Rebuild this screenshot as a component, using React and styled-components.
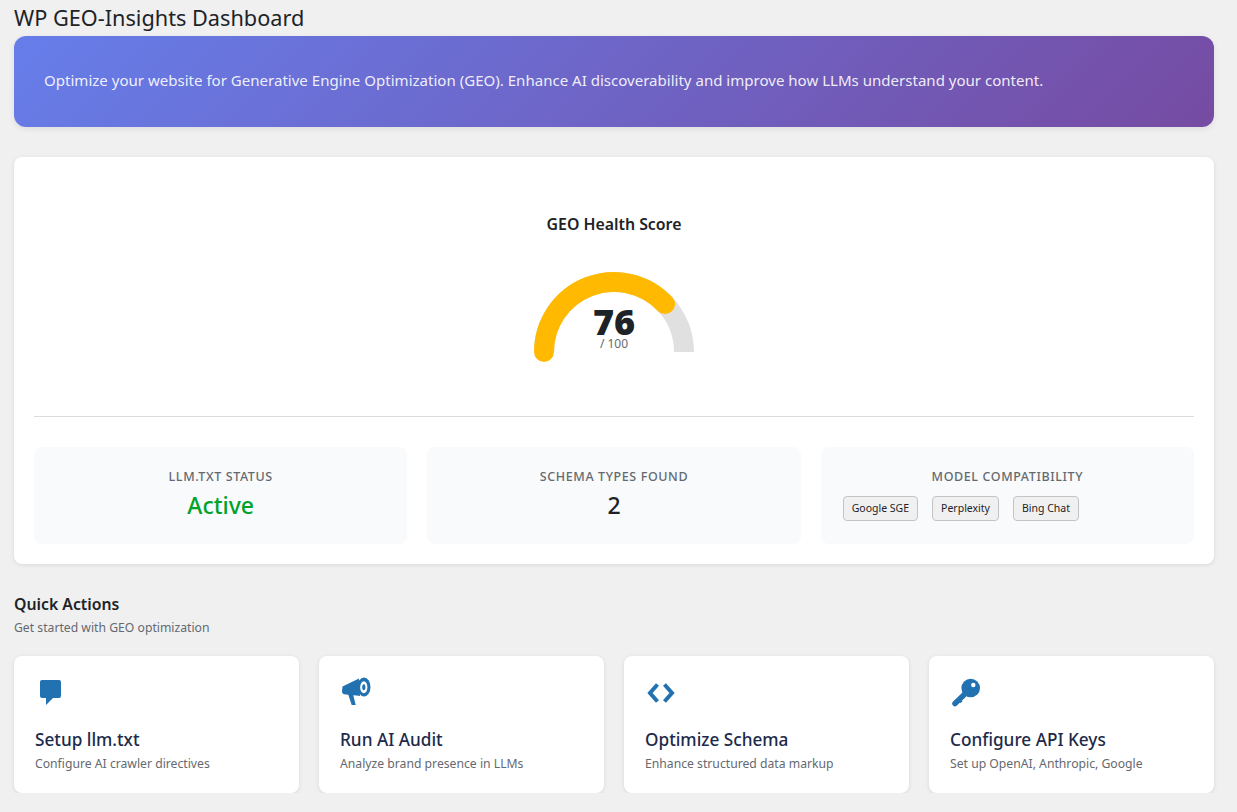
import React from 'react';
import styled, {createGlobalStyle} from 'styled-components';

const Global = createGlobalStyle`
  html, body { margin: 0; padding: 0; background: #f0f0f1; }
  body { font-family: "Noto Sans", "Open Sans", "Liberation Sans", sans-serif; color: #1d2327; }
  * { box-sizing: border-box; }
`;

const Page = styled.div`
  width: 1200px;
  margin-left: 14px;
`;

const Title = styled.h1`
  margin: 0;
  padding-top: 3px;
  height: 36px;
  font-size: 21.7px;
  line-height: 29px;
  font-weight: 400;
  color: #1d2327;
`;

const Hero = styled.div`
  height: 91px;
  padding: 0 30px 3px;
  display: flex;
  align-items: center;
  border-radius: 12px;
  background: linear-gradient(135deg, #667eea 0%, #764ba2 100%);
  color: rgba(255,255,255,0.9);
  font-size: 15.05px;
  box-shadow: 0 2px 6px rgba(0,0,0,0.08);
`;

const ScoreCard = styled.section`
  margin-top: 30px;
  height: 407px;
  padding: 0 20px;
  background: #fff;
  border-radius: 8px;
  box-shadow: 0 1px 4px rgba(0,0,0,0.1);
`;

const GaugeArea = styled.div`
  height: 260px;
  display: flex;
  flex-direction: column;
  align-items: center;
  border-bottom: 1px solid #dcdcde;
`;

const GaugeTitle = styled.h2`
  margin: 56px 0 0;
  font-size: 15.85px;
  line-height: 22px;
  font-weight: 600;
  color: #1d2327;
`;

const GaugeBox = styled.div`
  position: relative;
  margin-top: 37px;
  width: 160px;
  height: 80px;
`;

const GaugeSvg = styled.svg`
  display: block;
  overflow: visible;
`;

const GaugeValue = styled.div`
  position: absolute;
  left: 0;
  right: 0;
  top: 35px;
  text-align: center;
  font-size: 36px;
  line-height: 30px;
  font-weight: 900;
  color: #1d2327;
`;

const GaugeMax = styled.div`
  position: absolute;
  left: 0;
  right: 0;
  top: 65px;
  text-align: center;
  font-size: 12px;
  line-height: 13px;
  color: #646970;
`;

const Stats = styled.div`
  margin-top: 30px;
  display: grid;
  grid-template-columns: repeat(3, 1fr);
  gap: 20px;
`;

const Stat = styled.div`
  height: 97px;
  padding-top: 21px;
  background: #f9fafb;
  border-radius: 8px;
  text-align: center;
`;

const StatLabel = styled.div`
  font-size: 12.5px;
  line-height: 18px;
  font-weight: 500;
  letter-spacing: 0.6px;
  text-transform: uppercase;
  color: #646970;
`;

const StatValue = styled.div`
  margin-top: 3px;
  font-size: 23px;
  line-height: 32px;
  font-weight: 500;
  color: ${p => p.$color || '#1d2327'};
`;

const Tags = styled.div`
  margin-top: 10px;
  padding-left: 22px;
  display: flex;
  gap: 14px;
`;

const Tag = styled.span`
  height: 25px;
  padding: 0 8px 1px;
  display: flex;
  align-items: center;
  font-size: 10.5px;
  color: #1d2327;
  background: #f0f0f1;
  border: 1px solid #c3c4c7;
  border-radius: 4px;
`;

const SectionTitle = styled.h3`
  margin: 29px 0 0;
  font-size: 15.8px;
  line-height: 22px;
  font-weight: 600;
  color: #1d2327;
`;

const SectionSub = styled.p`
  margin: 5px 0 0;
  font-size: 12.2px;
  line-height: 16px;
  color: #646970;
`;

const Actions = styled.div`
  margin-top: 20px;
  display: grid;
  grid-template-columns: repeat(4, 1fr);
  gap: 20px;
`;

const Action = styled.div`
  height: 137px;
  padding: 21px 21px 0;
  background: #fff;
  border-radius: 8px;
  box-shadow: 0 1px 4px rgba(0,0,0,0.1);
`;

const ActionIcon = styled.svg`
  display: block;
  width: 32px;
  height: 32px;
  color: #2271b1;
`;

const ActionTitle = styled.div`
  margin-top: 19px;
  font-size: 17.2px;
  line-height: 24px;
  font-weight: 500;
  color: #1d2a4a;
`;

const ActionText = styled.div`
  margin-top: 3px;
  font-size: 12.2px;
  line-height: 18px;
  color: #646970;
`;

const icons = {
  bubble: (
    <path fill="currentColor" d="M7 3h17a2 2 0 0 1 2 2v14a2 2 0 0 1-2 2h-6l-7 7v-7H7a2 2 0 0 1-2-2V5a2 2 0 0 1 2-2z" />
  ),
  megaphone: (
    <>
      <path fill="currentColor" d="M2.500 9.500 19 1.500l1 17.500-3.500-.5-3.200-.3 2.400 9.800h-4L8.300 17.700 4 17.200C2.500 17 2 15.500 2 14z" />
      <ellipse fill="currentColor" cx="24" cy="10" rx="6.500" ry="9.500" />
      <ellipse fill="#fff" cx="23.800" cy="10.200" rx="3.600" ry="6" />
      <ellipse fill="currentColor" cx="23.800" cy="10.200" rx="1.600" ry="3" />
    </>
  ),
  code: (
    <path fill="none" stroke="currentColor" strokeWidth="4" d="M12.500 7.500 5 16l7.500 8.500M19.500 7.500 27 16l-7.500 8.500" />
  ),
  key: (
    <>
      <circle fill="currentColor" cx="20.700" cy="11" r="9.300" />
      <path fill="none" stroke="currentColor" strokeWidth="5.500" strokeLinecap="round" d="M17 15 5 26.500" />
      <path fill="currentColor" d="M9 21l3.500 3.500-2 1.500-3.500-3z" />
      <circle fill="#fff" cx="23.300" cy="8" r="2.200" />
    </>
  ),
};

const actions = [
  {icon: 'bubble', title: 'Setup llm.txt', text: 'Configure AI crawler directives'},
  {icon: 'megaphone', title: 'Run AI Audit', text: 'Analyze brand presence in LLMs'},
  {icon: 'code', title: 'Optimize Schema', text: 'Enhance structured data markup'},
  {icon: 'key', title: 'Configure API Keys', text: 'Set up OpenAI, Anthropic, Google'},
];

function Gauge({score}) {
  const angle = Math.PI * (1 - score / 100);
  const x = 80 + 70 * Math.cos(angle);
  const y = 80 - 70 * Math.sin(angle);
  return (
    <GaugeBox>
      <GaugeSvg width="160" height="80" viewBox="0 0 160 80">
        <path d="M10 80A70 70 0 0 1 150 80" fill="none" stroke="#e0e0e0" strokeWidth="20" />
        <path d={`M10 80A70 70 0 0 1 ${x} ${y}`} fill="none" stroke="#ffb900" strokeWidth="20" strokeLinecap="round" />
      </GaugeSvg>
      <GaugeValue>{score}</GaugeValue>
      <GaugeMax>/ 100</GaugeMax>
    </GaugeBox>
  );
}

export default function App() {
  return (
    <Page>
      <Global />
      <Title>WP GEO-Insights Dashboard</Title>
      <Hero>Optimize your website for Generative Engine Optimization (GEO). Enhance AI discoverability and improve how LLMs understand your content.</Hero>
      <ScoreCard>
        <GaugeArea>
          <GaugeTitle>GEO Health Score</GaugeTitle>
          <Gauge score={76} />
        </GaugeArea>
        <Stats>
          <Stat>
            <StatLabel>llm.txt Status</StatLabel>
            <StatValue $color="#00a32a">Active</StatValue>
          </Stat>
          <Stat>
            <StatLabel>Schema Types Found</StatLabel>
            <StatValue>2</StatValue>
          </Stat>
          <Stat>
            <StatLabel>Model Compatibility</StatLabel>
            <Tags>
              <Tag>Google SGE</Tag>
              <Tag>Perplexity</Tag>
              <Tag>Bing Chat</Tag>
            </Tags>
          </Stat>
        </Stats>
      </ScoreCard>
      <SectionTitle>Quick Actions</SectionTitle>
      <SectionSub>Get started with GEO optimization</SectionSub>
      <Actions>
        {actions.map(a => (
          <Action key={a.title}>
            <ActionIcon viewBox="0 0 32 32">{icons[a.icon]}</ActionIcon>
            <ActionTitle>{a.title}</ActionTitle>
            <ActionText>{a.text}</ActionText>
          </Action>
        ))}
      </Actions>
    </Page>
  );
}
